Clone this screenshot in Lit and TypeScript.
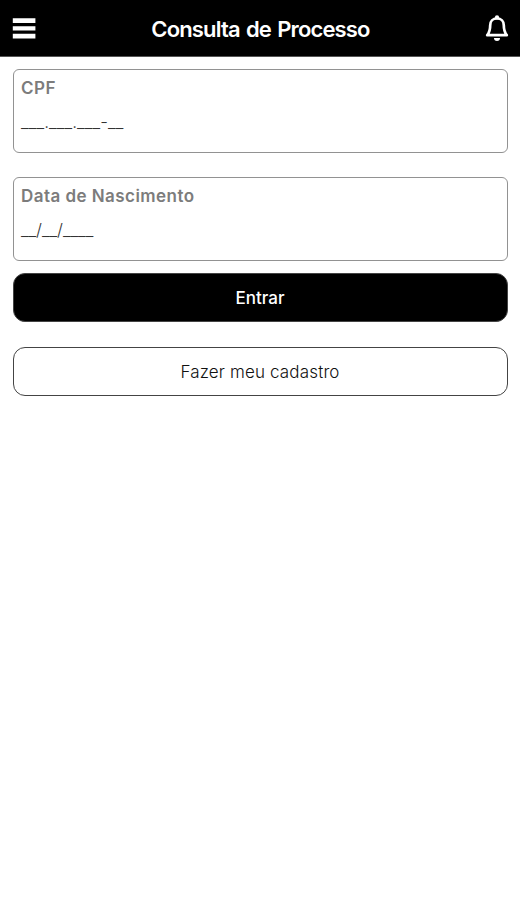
import { LitElement, html, css } from "lit";
import { customElement, property } from "lit/decorators.js";

@customElement("masked-field")
class MaskedField extends LitElement {
  @property() label = "";
  @property() mask = "";

  static styles = css`
    :host {
      display: block;
      box-sizing: border-box;
      height: 84px;
      padding: 8px 7px 0;
      border: 1px solid #929292;
      border-radius: 6px;
    }
    .label {
      font-size: 17px;
      line-height: 20px;
      font-weight: 600;
      color: #7c7c7c;
      letter-spacing: 0.45px;
      white-space: nowrap;
    }
    .mask {
      margin-top: 13px;
      font-size: 17px;
      line-height: 22px;
      font-weight: 300;
      color: #333;
      letter-spacing: var(--mask-spacing, 0.1px);
      white-space: nowrap;
    }
  `;

  render() {
    return html`<div class="label">${this.label}</div>
      <div class="mask">${this.mask}</div>`;
  }
}

@customElement("app-root")
class AppRoot extends LitElement {
  static styles = css`
    :host {
      display: block;
      min-height: 900px;
      background: #fff;
      font-family: Inter, "Liberation Sans", sans-serif;
    }
    header {
      display: flex;
      align-items: center;
      justify-content: space-between;
      box-sizing: border-box;
      height: 57px;
      padding: 0 10px 0 12px;
      background: #000;
      border-bottom: 1px solid #555;
    }
    .icon {
      display: block;
      flex: none;
    }
    h1 {
      margin: 0;
      padding: 2px 0 0 1px;
      font-size: 22px;
      line-height: 28px;
      font-weight: 600;
      letter-spacing: -0.85px;
      word-spacing: 1.5px;
      color: #fff;
      white-space: nowrap;
    }
    main {
      display: flex;
      flex-direction: column;
      padding: 12px 12px 0 13px;
    }
    .birth {
      margin-top: 24px;
      --mask-spacing: -0.05px;
    }
    button {
      box-sizing: border-box;
      height: 49px;
      padding: 0 1px 0 0;
      border: 1px solid #444;
      border-radius: 12px;
      background: #fff;
      color: #222;
      font: 400 17px/22px Inter, "Liberation Sans", sans-serif;
    }
    .enter {
      margin-top: 12px;
      background: #000;
      color: #fff;
      font-weight: 500;
    }
    .register {
      margin-top: 25px;
      font-weight: 300;
      color: #111;
      letter-spacing: 0.15px;
    }
  `;

  render() {
    return html`
      <header>
        <svg class="icon" width="24" height="24" viewBox="0 0 24 24" fill="#fff">
          <path d="M.8 2.2h22.6v4.9H.8zM.8 10.2h22.6v4.4H.8zM.8 17.8h22.6v4.6H.8z" />
        </svg>
        <h1>Consulta de Processo</h1>
        <svg class="icon" width="26" height="30" viewBox="0 0 26 30">
          <path
            d="M13 5.5C8.8 5.5 6.2 8.3 6.2 12.3C6.2 17 5.4 19.6 3.2 22.2H22.8C20.6 19.6 19.8 17 19.8 12.3C19.8 8.3 17.2 5.5 13 5.5Z"
            fill="none" stroke="#fff" stroke-width="2.7" stroke-linejoin="round" />
          <circle cx="13" cy="4.3" r="2.1" fill="#fff" />
          <path d="M10 25h6a3 3 0 0 1-6 0z" fill="#fff" />
        </svg>
      </header>
      <main>
        <masked-field label="CPF" mask="___.___.___-__"></masked-field>
        <masked-field class="birth" label="Data de Nascimento" mask="__/__/____"></masked-field>
        <button class="enter">Entrar</button>
        <button class="register">Fazer meu cadastro</button>
      </main>
    `;
  }
}
